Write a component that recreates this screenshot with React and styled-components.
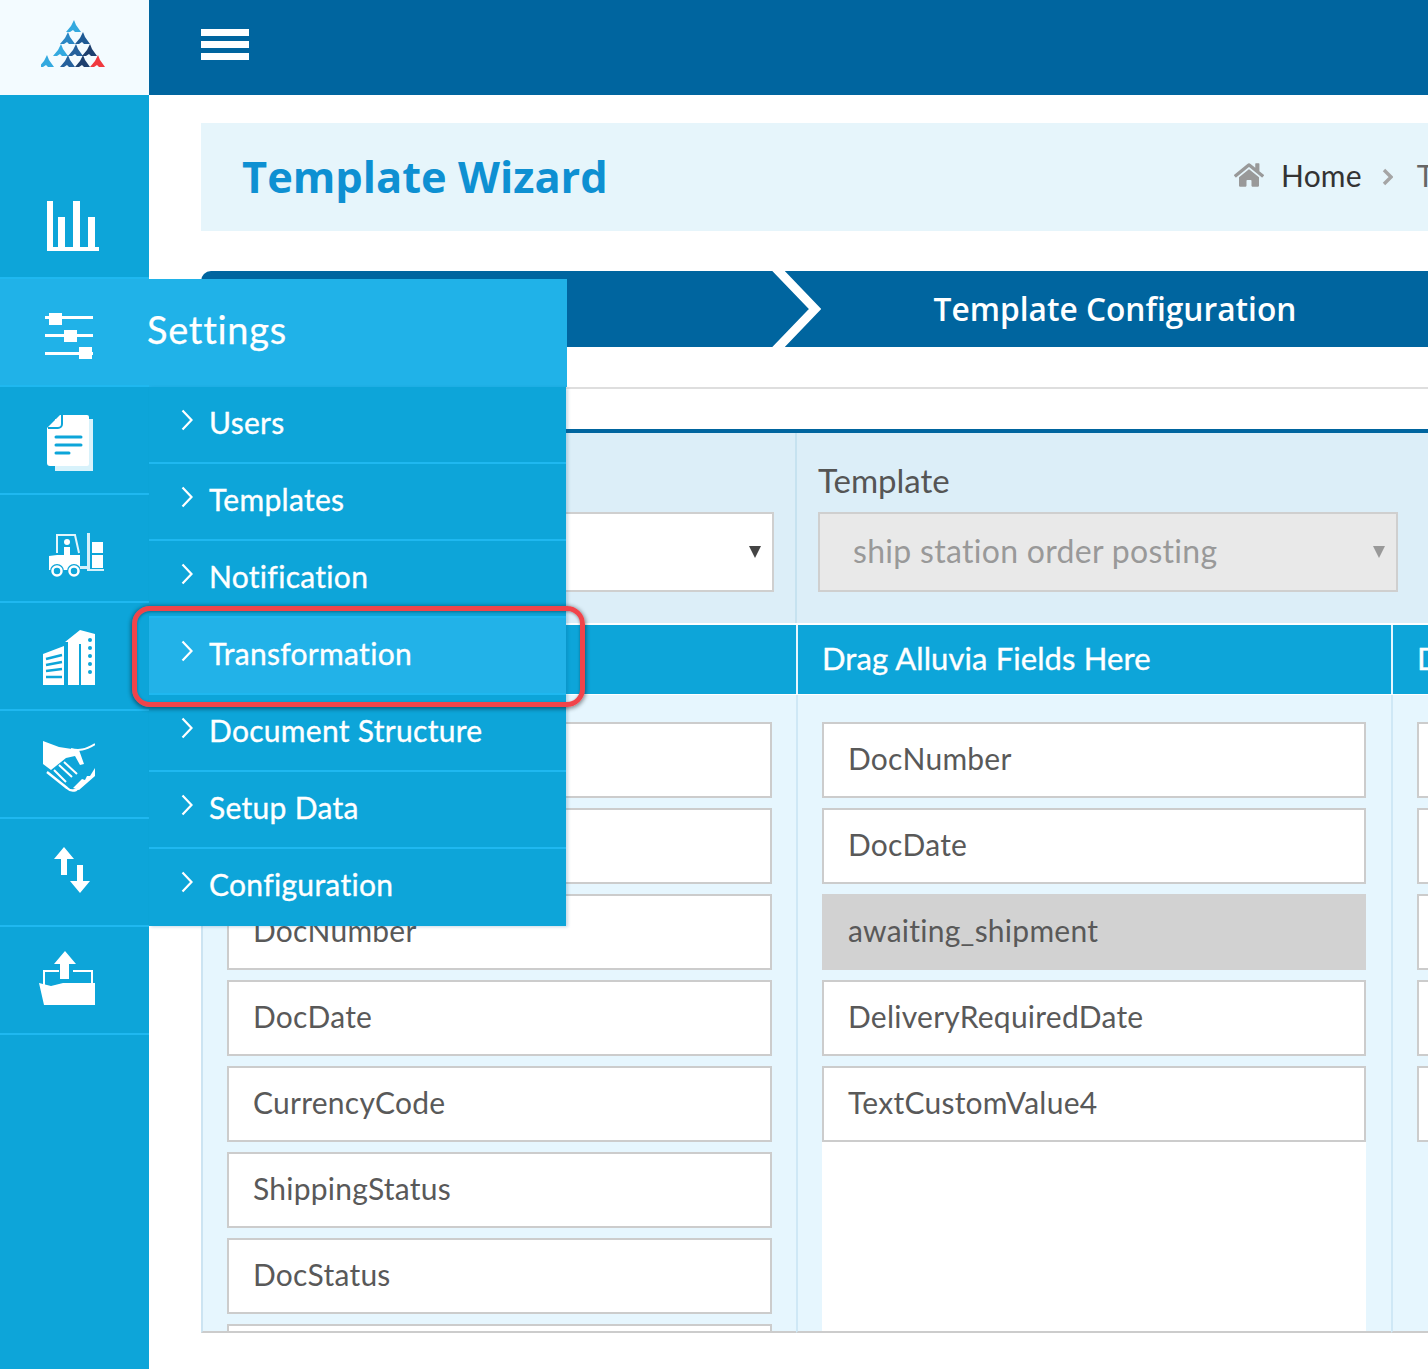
import React from 'react'
import styled, { createGlobalStyle } from 'styled-components'
import { FaHome } from 'react-icons/fa'

const GlobalStyle = createGlobalStyle`
  html, body {
    margin: 0;
    padding: 0;
    background: #fff;
    overflow: hidden;
    font-family: Lato, "Open Sans", sans-serif;
    font-variant-ligatures: none;
  }
  * { box-sizing: border-box; }
`

const Page = styled.div`
  display: flex;
  width: 1428px;
  height: 1369px;
  overflow: hidden;
`

const Sidebar = styled.aside`
  width: 149px;
  flex-shrink: 0;
  background: #0da5d9;
  display: flex;
  flex-direction: column;
`

const LogoBox = styled.div`
  height: 95px;
  background: #f3fbff;
  padding: 20px 0 0 41px;
`

const NavItem = styled.div`
  position: relative;
  height: ${p => p.$height || 108}px;
  padding: ${p => p.$top}px 0 0 ${p => p.$left}px;
  background: ${p => (p.$active ? '#20b2e8' : 'transparent')};
  border-bottom: 2px solid #1fb8f0;
  z-index: ${p => (p.$active ? 5 : 1)};
  svg { display: block; }
`

const Flyout = styled.div`
  position: absolute;
  left: 149px;
  top: 0;
  width: 418px;
`

const FlyoutTitle = styled.div`
  height: 108px;
  background: #20b2e8;
  color: #fff;
  font-size: 38px;
  letter-spacing: 0.7px;
  -webkit-text-stroke: 0.25px #fff;
  line-height: 100px;
  text-indent: -2px;
`

const SubMenu = styled.ul`
  list-style: none;
  margin: 0;
  padding: 0;
  width: 417px;
  background: #0da5d9;
  box-shadow: 2px 1px 3px rgba(0, 90, 140, 0.22);
`

const SubItem = styled.li`
  position: relative;
  height: 77px;
  display: flex;
  align-items: center;
  gap: 16px;
  padding: 0 0 6px 32px;
  color: #fff;
  font-size: 30px;
  letter-spacing: 0.3px;
  -webkit-text-stroke: 0.35px #fff;
  background: ${p => (p.$hot ? '#22b2e8' : 'transparent')};
  border-bottom: 2px solid ${p => (p.$last ? 'transparent' : '#1fb8f0')};
  svg { margin-top: -4px; flex-shrink: 0; }
`

const Callout = styled.div`
  position: absolute;
  top: -12px;
  left: -17px;
  right: -19px;
  bottom: -14px;
  border: 5px solid #f1444a;
  border-radius: 18px;
  box-shadow: 0 1px 4px 1px rgba(0, 0, 0, 0.45), inset 0 1px 3px rgba(0, 0, 0, 0.35);
`

const Main = styled.main`
  flex: 1;
  min-width: 0;
  display: flex;
  flex-direction: column;
`

const TopBar = styled.header`
  height: 95px;
  flex-shrink: 0;
  background: #00659f;
  padding: 29px 0 0 52px;
`

const Burger = styled.div`
  width: 48px;
  display: flex;
  flex-direction: column;
  gap: 5px;
  span {
    display: block;
    height: 7px;
    background: #fff;
  }
`

const Content = styled.div`
  flex: 1;
  padding: 28px 0 0 52px;
  min-height: 0;
`

const TitleBar = styled.div`
  height: 108px;
  background: #e6f5fb;
  display: flex;
  align-items: center;
  justify-content: space-between;
  padding-left: 41px;
  overflow: hidden;
`

const Title = styled.h1`
  margin: 0 0 2px;
  font-family: "Open Sans", sans-serif;
  font-size: 43.4px;
  font-weight: 700;
  color: #0e90d2;
  white-space: nowrap;
`

const Crumbs = styled.div`
  display: flex;
  align-items: center;
  width: 194px;
  flex-shrink: 0;
  padding-bottom: 4px;
  white-space: nowrap;
  font-size: 30px;
  letter-spacing: 0.2px;
  color: #333;
  svg { color: #999; flex-shrink: 0; }
`

const CrumbLink = styled.span`
  margin-left: 17px;
`

const CrumbSep = styled.span`
  margin: 3px 24px 0 20px;
  display: flex;
`

const CrumbNext = styled.span`
  color: #666;
`

const Wizard = styled.div`
  margin-top: 40px;
  height: 76px;
  display: flex;
  background: #00659f;
  border-top-left-radius: 10px;
  color: #fff;
  overflow: hidden;
`

const StepFirst = styled.div`
  position: relative;
  width: 601px;
  flex-shrink: 0;
  svg {
    position: absolute;
    right: -20px;
    top: 0;
    overflow: visible;
  }
`

const Step = styled.div`
  flex: 1;
  display: flex;
  align-items: center;
  justify-content: center;
  padding-bottom: 2px;
  font-family: "Open Sans", sans-serif;
  font-size: 31.7px;
  font-weight: 600;
`

const Rule = styled.div`
  margin-top: 40px;
  height: 2px;
  background: #dedede;
`

const Panel = styled.section`
  margin-top: 40px;
  border-top: 4px solid #00659f;
  overflow: hidden;
`

const Filters = styled.div`
  display: grid;
  grid-template-columns: 594px 1fr;
  height: 190px;
  background: #dceef8;
`

const FilterCell = styled.div`
  padding: 79px 21px 0 ${p => p.$left}px;
  position: relative;
  & + & { border-left: 2px solid #c6e2f0; }
`

const FilterLabel = styled.label`
  position: absolute;
  top: 27px;
  left: 21px;
  font-size: 33px;
  color: #555;
`

const Select = styled.div`
  position: relative;
  height: 80px;
  width: ${p => p.$width}px;
  display: flex;
  align-items: center;
  padding: 0 0 4px 33px;
  font-size: 32px;
  letter-spacing: 0.3px;
  white-space: nowrap;
  color: #999;
  background: ${p => (p.$disabled ? '#e9e9e9' : '#fff')};
  border: 2px solid #cfcfcf;
  &::after {
    content: '';
    position: absolute;
    right: 11px;
    top: 32px;
    border-style: solid;
    border-width: 12px 6px 0;
    border-color: ${p => (p.$disabled ? '#999' : '#444')} transparent transparent;
  }
`

const Columns = styled.div`
  margin-top: 2px;
  display: grid;
  grid-template-columns: 595px 595px 1fr;
`

const ColumnHead = styled.div`
  height: 69px;
  background: #0da5d9;
  color: #fff;
  font-size: 31px;
  letter-spacing: 0.1px;
  -webkit-text-stroke: 0.35px #fff;
  display: flex;
  align-items: center;
  padding: 0 0 4px 24px;
  white-space: nowrap;
  overflow: hidden;
  border-left: ${p => (p.$first ? 0 : '2px solid #e6f6fe')};
`

const ColumnBody = styled.div`
  margin-top: 1px;
  height: 638px;
  background: #e6f6fe;
  padding: 27px ${p => (p.$first ? 24 : 25)}px 0 24px;
  display: flex;
  flex-direction: column;
  overflow: hidden;
  border-left: 2px solid ${p => (p.$first ? '#cce4f2' : '#cfe8f6')};
  border-bottom: 2px solid #cccccc;
`

const Field = styled.div`
  flex-shrink: 0;
  height: 76px;
  margin-bottom: 10px;
  display: flex;
  align-items: center;
  padding: 0 0 4px 24px;
  font-size: 30px;
  letter-spacing: 0.25px;
  color: #595959;
  background: ${p => (p.$mapped ? '#d2d2d2' : '#fff')};
  border: 2px solid ${p => (p.$mapped ? '#d2d2d2' : '#cccccc')};
`

const Filler = styled.div`
  flex: 1;
  margin-top: -10px;
  background: #fff;
`

const ChartIcon = () => (
  <svg width="52" height="50" viewBox="0 0 52 50" fill="#fff">
    <rect x="0" y="0" width="6" height="50" />
    <rect x="11" y="16" width="7" height="34" />
    <rect x="26" y="0" width="7" height="50" />
    <rect x="41" y="16" width="7" height="34" />
    <rect x="0" y="46" width="52" height="4" />
  </svg>
)

const SlidersIcon = () => (
  <svg width="48" height="46" viewBox="0 0 48 46" fill="#fff">
    <rect x="0" y="3" width="48" height="3" />
    <rect x="4" y="0" width="13" height="12" />
    <rect x="0" y="21" width="48" height="3" />
    <rect x="19" y="17" width="13" height="12" />
    <rect x="0" y="39" width="48" height="3" />
    <rect x="34" y="34" width="13" height="12" />
  </svg>
)

const DocIcon = () => (
  <svg width="46" height="56" viewBox="0 0 46 56">
    <path d="M8 4h38v52H8z" fill="#d8f2fb" />
    <path d="M13 0h27a2 2 0 0 1 2 2v47a2 2 0 0 1-2 2H3a3 3 0 0 1-3-3V13z" fill="#fff" />
    <path d="M15 0v9a4 4 0 0 1-4 4H1" fill="none" stroke="#0da5d9" strokeWidth="2" />
    <path d="M9 22h25M9 30h25M9 38h13" stroke="#0da5d9" strokeWidth="3" strokeLinecap="round" />
  </svg>
)

const ForkliftIcon = () => (
  <svg width="55" height="45" viewBox="0 0 55 45" fill="#fff">
    <path d="M8 20V2h18l4 18" fill="none" stroke="#e3f6fc" strokeWidth="2" />
    <circle cx="18" cy="9" r="3" />
    <path d="M15 14h6v8h4v4H15z" />
    <path d="M0 23l8-1h23v15H0z" />
    <circle cx="8" cy="38" r="7" fill="#0da5d9" />
    <circle cx="25" cy="38" r="7" fill="#0da5d9" />
    <circle cx="8" cy="38" r="4.5" fill="none" stroke="#fff" strokeWidth="2.5" />
    <circle cx="25" cy="38" r="4.5" fill="none" stroke="#fff" strokeWidth="2.5" />
    <rect x="38" y="0" width="3" height="38" fill="#d5f1fb" />
    <path d="M31 33h7v3h-7zM41 36h14v2H41z" fill="#d5f1fb" />
    <rect x="43" y="9" width="11" height="11" />
    <rect x="43" y="22" width="11" height="13" />
  </svg>
)

const BuildingIcon = () => (
  <svg width="52" height="55" viewBox="0 0 52 55" fill="#fff">
    <path d="M0 24l21-8v39H0z" />
    <path d="M22 12L37 0l15 4v51H25V12z" />
    <path d="M3 29l16-4M3 35l16-3M3 41l16-2M3 47h16" stroke="#0da5d9" strokeWidth="2.4" />
    <path d="M37 14v41" stroke="#0da5d9" strokeWidth="2" />
    <g fill="#0da5d9">
      <circle cx="47" cy="10" r="2" />
      <circle cx="47" cy="18" r="2" />
      <circle cx="47" cy="26" r="2" />
      <circle cx="47" cy="34" r="2" />
      <circle cx="47" cy="42" r="2" />
    </g>
  </svg>
)

const HandshakeIcon = () => (
  <svg width="52" height="52" viewBox="0 0 52 52">
    <path d="M0 0l16 6 13 2 7 1 5 14-4 1-5-9-9 2-15 12-8-6V0z" fill="#fff" />
    <path d="M28 8c8 2 14 1 24-5" fill="none" stroke="#fff" strokeWidth="2" />
    <path d="M4 31l20 16c3 3 6 3 9 2l8-7" fill="none" stroke="#fff" strokeWidth="2.4" />
    <path d="M16 24l13 12M21 21l13 12M11 29l12 12" stroke="#fff" strokeWidth="2" />
    <path d="M30 47l9-9 3 1 2-4 3 0 5-8v8L36 49z" fill="#fff" />
  </svg>
)

const ArrowsIcon = () => (
  <svg width="38" height="46" viewBox="0 0 38 46" fill="#fff">
    <path d="M11 0l10 12h-7v16H8V12H1z" />
    <path d="M27 46L17 34h7V18h6v16h7z" />
  </svg>
)

const FolderIcon = () => (
  <svg width="56" height="54" viewBox="0 0 56 54">
    <path d="M5 36V20h15M34 20h19v12" fill="none" stroke="#fff" strokeWidth="2" />
    <path d="M26 0l11 13h-7v15h-9V13h-6z" fill="#fff" />
    <path d="M0 32l12 3 12-3h32v22H5z" fill="#fff" />
  </svg>
)

const Chevron = () => (
  <svg width="12" height="22" viewBox="0 0 12 22" fill="none" stroke="#fff" strokeWidth="2.2">
    <path d="M1.5 1.5L10.5 11L1.5 20.5" />
  </svg>
)

const LogoMark = ({ x, y, color }) => (
  <path d={`M${x} ${y}l2 5 5 7h-6l-2-2-3 2h-4l5-6z`} fill={color} />
)

const marks = [
  [33, 0, '#33a9df'],
  [27, 12, '#2a86c4'],
  [42, 12, '#1f5a94'],
  [20, 24, '#33a9df'],
  [35, 24, '#24609c'],
  [49, 24, '#1d3f6e'],
  [6, 35, '#33a9df'],
  [27, 35, '#24609c'],
  [42, 35, '#1d3f6e'],
  [57, 35, '#f0393f'],
]

const Logo = () => (
  <svg width="64" height="48" viewBox="0 0 64 48">
    {marks.map(([x, y, color]) => (
      <LogoMark key={`${x}-${y}`} x={x} y={y} color={color} />
    ))}
  </svg>
)

const subItems = ['Users', 'Templates', 'Notification', 'Transformation', 'Document Structure', 'Setup Data', 'Configuration']

const sourceFields = ['', '', 'DocNumber', 'DocDate', 'CurrencyCode', 'ShippingStatus', 'DocStatus', '']
const targetFields = ['DocNumber', 'DocDate', 'awaiting_shipment', 'DeliveryRequiredDate', 'TextCustomValue4']
const nextFields = ['', '', '', '', '']

const App = () => {
  return (
    <Page>
      <GlobalStyle />
      <Sidebar>
        <LogoBox>
          <Logo />
        </LogoBox>
        <NavItem $height={184} $top={106} $left={47}>
          <ChartIcon />
        </NavItem>
        <NavItem $active $top={34} $left={45}>
          <SlidersIcon />
          <Flyout>
            <FlyoutTitle>Settings</FlyoutTitle>
            <SubMenu>
              {subItems.map((item, i) => (
                <SubItem key={item} $hot={item === 'Transformation'} $last={i === subItems.length - 1}>
                  <Chevron />
                  {item}
                  {item === 'Transformation' && <Callout />}
                </SubItem>
              ))}
            </SubMenu>
          </Flyout>
        </NavItem>
        <NavItem $top={28} $left={47}><DocIcon /></NavItem>
        <NavItem $top={38} $left={49}><ForkliftIcon /></NavItem>
        <NavItem $top={27} $left={43}><BuildingIcon /></NavItem>
        <NavItem $top={30} $left={43}><HandshakeIcon /></NavItem>
        <NavItem $top={28} $left={53}><ArrowsIcon /></NavItem>
        <NavItem $top={24} $left={39}><FolderIcon /></NavItem>
      </Sidebar>
      <Main>
        <TopBar>
          <Burger><span /><span /><span /></Burger>
        </TopBar>
        <Content>
          <TitleBar>
            <Title>Template Wizard</Title>
            <Crumbs>
              <FaHome size={30} />
              <CrumbLink>Home</CrumbLink>
              <CrumbSep>
                <svg width="11" height="18" viewBox="0 0 11 18" fill="none" stroke="#a5a5a5" strokeWidth="3.4">
                  <path d="M2 2l7 7-7 7" />
                </svg>
              </CrumbSep>
              <CrumbNext>Template Wizard</CrumbNext>
            </Crumbs>
          </TitleBar>
          <Wizard>
            <StepFirst>
              <svg width="52" height="76" viewBox="0 0 52 76" fill="none" stroke="#fff" strokeWidth="9">
                <path d="M4.7 -4L45 38L4.7 80" />
              </svg>
            </StepFirst>
            <Step>Template Configuration</Step>
          </Wizard>
          <Rule />
          <Panel>
            <Filters>
              <FilterCell $left={30}>
                <Select $width={543} />
              </FilterCell>
              <FilterCell $left={21}>
                <FilterLabel>Template</FilterLabel>
                <Select $width={580} $disabled>ship station order posting</Select>
              </FilterCell>
            </Filters>
            <Columns>
              <ColumnHead $first />
              <ColumnHead>Drag Alluvia Fields Here</ColumnHead>
              <ColumnHead>Drag</ColumnHead>
              <ColumnBody $first>
                {sourceFields.map((name, i) => <Field key={i}>{name}</Field>)}
              </ColumnBody>
              <ColumnBody>
                {targetFields.map(name => (
                  <Field key={name} $mapped={name === 'awaiting_shipment'}>{name}</Field>
                ))}
                <Filler />
              </ColumnBody>
              <ColumnBody>
                {nextFields.map((name, i) => <Field key={i}>{name}</Field>)}
              </ColumnBody>
            </Columns>
          </Panel>
        </Content>
      </Main>
    </Page>
  )
}

export default App
